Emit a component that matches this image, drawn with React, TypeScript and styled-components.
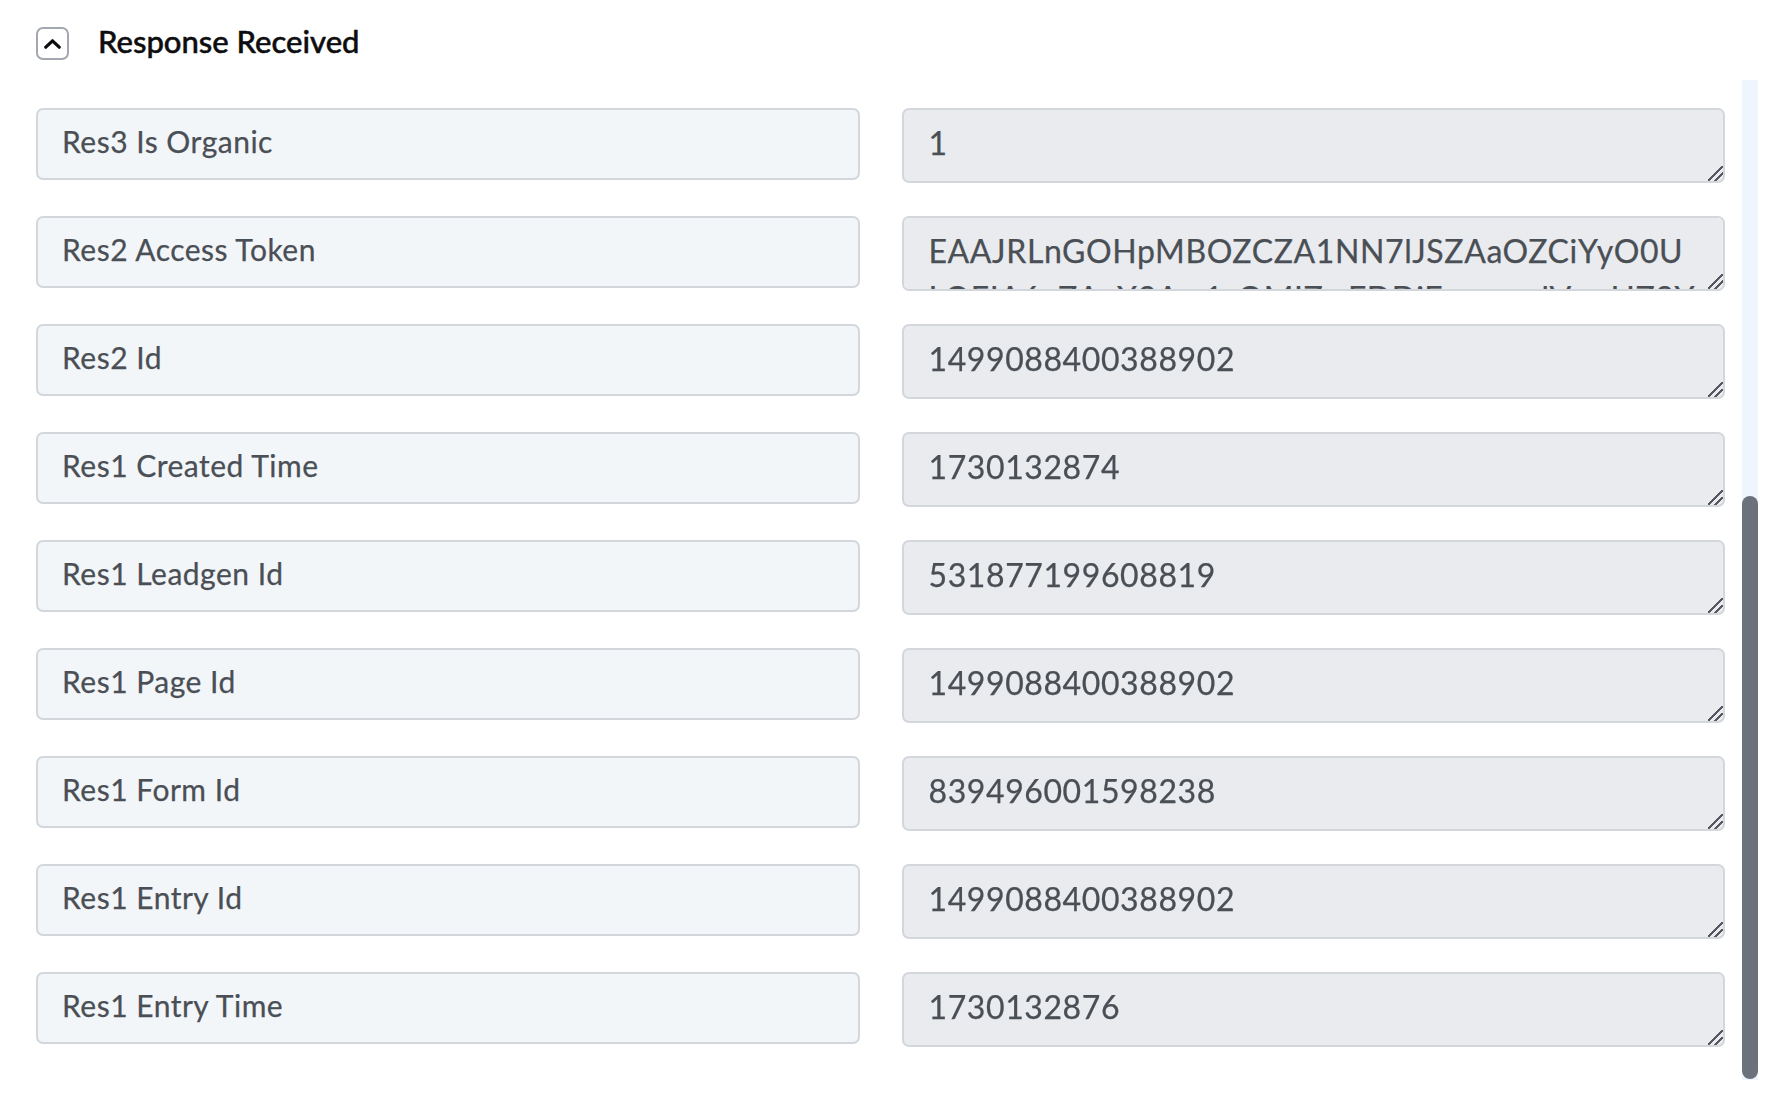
import { Fragment } from "react"
import styled, { createGlobalStyle } from "styled-components"

const Global = createGlobalStyle`
  html, body {
    margin: 0;
    background: #ffffff;
  }
  body {
    font-family: Lato, "Noto Sans", sans-serif;
  }
`

const Page = styled.div`
  width: 1786px;
  height: 1104px;
  display: flex;
  flex-direction: column;
`

const Header = styled.div`
  height: 80px;
  box-sizing: border-box;
  padding: 27px 0 0 36px;
  display: flex;
  align-items: flex-start;
  gap: 29px;
`

const Toggle = styled.button`
  width: 33px;
  height: 33px;
  box-sizing: border-box;
  border: 2px solid #a3a8b0;
  border-radius: 7px;
  background: #ffffff;
  padding: 0;
  display: flex;
  align-items: center;
  justify-content: center;
  cursor: pointer;
`

const Title = styled.h2`
  margin: 0;
  font-size: 31px;
  font-weight: 500;
  -webkit-text-stroke: 0.5px #0d0d0f;
  color: #0d0d0f;
  line-height: 28px;
`

const Body = styled.div`
  height: 1000px;
  display: flex;
  padding-right: 28px;
`

const List = styled.div`
  flex: 1;
  display: grid;
  grid-template-columns: 1fr 1fr;
  grid-auto-rows: min-content;
  column-gap: 42px;
  row-gap: 33px;
  align-items: start;
  padding: 28px 17px 0 36px;
`

const Track = styled.div`
  width: 16px;
  background: #eff5fc;
  display: flex;
  flex-direction: column;
`

const Thumb = styled.div<{ $top: number; $size: number }>`
  margin-top: ${(p) => p.$top}px;
  height: ${(p) => p.$size}px;
  border-radius: 8px;
  background: #6c727b;
`

const Label = styled.div`
  height: 72px;
  box-sizing: border-box;
  display: flex;
  align-items: center;
  padding: 0 24px 6px;
  border: 2px solid #d3d7dc;
  border-radius: 7px;
  background: #f3f6f9;
  font-size: 30px;
  letter-spacing: 0.5px;
  -webkit-text-stroke: 0.25px #4a4f56;
  color: #4a4f56;
`

const Value = styled.textarea`
  display: block;
  width: 100%;
  height: 75px;
  box-sizing: border-box;
  margin: 0;
  padding: 9px 25px;
  border: 2px solid #d3d7dc;
  border-radius: 7px;
  background: #e9ebee;
  font-family: Lato, "Noto Sans", sans-serif;
  font-size: 32px;
  letter-spacing: 0.6px;
  line-height: 47px;
  -webkit-text-stroke: 0.25px #4a4f56;
  color: #4a4f56;
  resize: vertical;
  outline: none;

  &::-webkit-resizer {
    background: linear-gradient(
      135deg,
      transparent 0 46%,
      #55595f 46% 54%,
      transparent 54% 70%,
      #55595f 70% 78%,
      transparent 78%
    );
  }
`

const rows: [string, string][] = [
  ["Res3 Is Organic", "1"],
  [
    "Res2 Access Token",
    "EAAJRLnGOHpMBOZCZA1NN7lJSZAaOZCiYyO0ULQEIA6eZAeX9Aw1sQMIZwFDDiFpmnwdVwsHZ9YiDwlZBkq",
  ],
  ["Res2 Id", "1499088400388902"],
  ["Res1 Created Time", "1730132874"],
  ["Res1 Leadgen Id", "531877199608819"],
  ["Res1 Page Id", "1499088400388902"],
  ["Res1 Form Id", "839496001598238"],
  ["Res1 Entry Id", "1499088400388902"],
  ["Res1 Entry Time", "1730132876"],
]

export default function App() {
  return (
    <Page>
      <Global />
      <Header>
        <Toggle aria-label="Collapse">
          <svg width="17" height="10" viewBox="0 0 17 10" fill="none">
            <polyline
              points="1.8,8.2 8.5,1.8 15.2,8.2"
              stroke="#0d0d0f"
              strokeWidth="3.2"
              strokeLinecap="round"
              strokeLinejoin="round"
            />
          </svg>
        </Toggle>
        <Title>Response Received</Title>
      </Header>
      <Body>
        <List>
          {rows.map(([label, value]) => (
            <Fragment key={label}>
              <Label>{label}</Label>
              <Value readOnly defaultValue={value} />
            </Fragment>
          ))}
        </List>
        <Track>
          <Thumb $top={416} $size={583} />
        </Track>
      </Body>
    </Page>
  )
}
